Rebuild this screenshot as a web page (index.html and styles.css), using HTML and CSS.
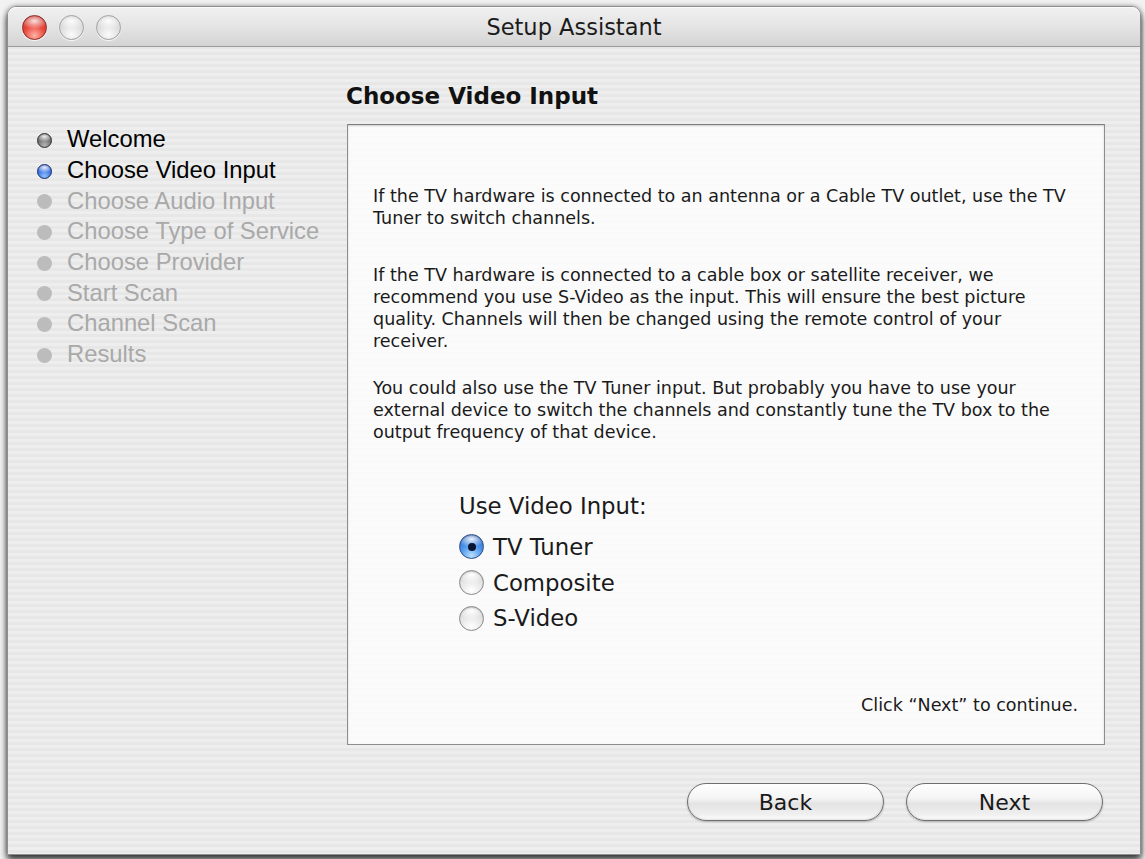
FILE: index.html
```html
<!DOCTYPE html>
<html>
<head>
<meta charset="utf-8">
<title>Setup Assistant</title>
<link rel="stylesheet" href="styles.css">
</head>
<body>
<div class="window">
  <div class="titlebar">
    <div class="lights">
      <span class="light close"></span>
      <span class="light"></span>
      <span class="light"></span>
    </div>
    <div class="title">Setup Assistant</div>
    <div class="spacer"></div>
  </div>
  <div class="content">
    <ul class="steps">
      <li class="done"><span class="dot"></span>Welcome</li>
      <li class="current"><span class="dot"></span>Choose Video Input</li>
      <li><span class="dot"></span>Choose Audio Input</li>
      <li><span class="dot"></span>Choose Type of Service</li>
      <li><span class="dot"></span>Choose Provider</li>
      <li><span class="dot"></span>Start Scan</li>
      <li><span class="dot"></span>Channel Scan</li>
      <li><span class="dot"></span>Results</li>
    </ul>
    <div class="main">
      <h1 class="heading">Choose Video Input</h1>
      <div class="panel">
        <p class="p1">If the TV hardware is connected to an antenna or a Cable TV outlet, use the TV Tuner to switch channels.</p>
        <p class="p2">If the TV hardware is connected to a cable box or satellite receiver, we recommend you use S-Video as the input. This will ensure the best picture quality. Channels will then be changed using the remote control of your receiver.</p>
        <p class="p3">You could also use the TV Tuner input. But probably you have to use your external device to switch the channels and constantly tune the TV box to the output frequency of that device.</p>
        <div class="choice">
          <div class="choice-label">Use Video Input:</div>
          <div class="radio-row"><span class="radio on"></span>TV Tuner</div>
          <div class="radio-row"><span class="radio"></span>Composite</div>
          <div class="radio-row"><span class="radio"></span>S-Video</div>
        </div>
        <div class="note">Click “Next” to continue.</div>
      </div>
      <div class="buttons">
        <button class="btn">Back</button>
        <button class="btn">Next</button>
      </div>
    </div>
  </div>
</div>
</body>
</html>
```
FILE: styles.css
```css
html, body {
  margin: 0;
  padding: 0;
}
body {
  background: #f2f2f2;
  padding: 6px 4px 0 7px;
  height: 859px;
  box-sizing: border-box;
  overflow: hidden;
  font-family: "DejaVu Sans", sans-serif;
}
.window {
  width: 1134px;
  height: 849px;
  box-sizing: border-box;
  border: 1px solid #8e8e8e;
  border-radius: 9px 9px 0 0;
  background: repeating-linear-gradient(180deg, #eeeeee 0px, #eeeeee 3px, #e7e7e7 3px, #e7e7e7 6px);
  box-shadow: 0 5px 7px rgba(0,0,0,0.75), 0 0 5px rgba(0,0,0,0.35);
  display: flex;
  flex-direction: column;
  overflow: hidden;
}
.titlebar {
  height: 39px;
  flex: none;
  border-bottom: 1px solid #9b9b9b;
  background: linear-gradient(180deg, #f1f1f1 0%, #e4e4e4 50%, #d4d4d4 100%);
  display: grid;
  grid-template-columns: 1fr auto 1fr;
  align-items: center;
  border-radius: 8px 8px 0 0;
  box-shadow: inset 0 1px 0 #fbfbfb;
}
.lights {
  display: flex;
  gap: 12px;
  padding-left: 14px;
  padding-top: 1px;
}
.light {
  width: 25px;
  height: 25px;
  box-sizing: border-box;
  border-radius: 50%;
  border: 1px solid #a3a3a3;
  background:
    radial-gradient(ellipse 60% 35% at 50% 22%, rgba(255,255,255,0.95), rgba(255,255,255,0) 100%),
    radial-gradient(circle at 50% 80%, #fbfbfb 0%, #e2e2e2 45%, #c9c9c9 100%);
  box-shadow: 0 1px 1px rgba(255,255,255,0.8);
}
.light.close {
  border-color: #8b2c25;
  background:
    radial-gradient(ellipse 60% 35% at 50% 22%, rgba(255,255,255,0.85), rgba(255,255,255,0) 100%),
    radial-gradient(circle at 50% 85%, #ffb2a6 0%, #ea4a3e 45%, #b7231a 100%);
}
.title {
  font-size: 22.5px;
  color: #1c1c1c;
  padding-top: 1px;
}
.content {
  flex: 1;
  display: flex;
}
.steps {
  list-style: none;
  margin: 0;
  padding: 77px 0 0 29px;
  width: 339px;
  box-sizing: border-box;
  font-family: "Liberation Sans", Arial, sans-serif;
  font-size: 23.8px;
  color: #a9a9a9;
}
.steps li {
  display: flex;
  align-items: center;
  height: 30.7px;
  white-space: nowrap;
}
.steps li.done, .steps li.current {
  color: #000;
}
.dot {
  width: 15px;
  height: 15px;
  box-sizing: border-box;
  border-radius: 50%;
  background: #bcbcbc;
  margin-right: 15px;
  flex: none;
  margin-top: 2px;
}
.done .dot {
  border: 1px solid #2d2d2d;
  background:
    radial-gradient(ellipse 70% 40% at 50% 20%, rgba(255,255,255,0.9), rgba(255,255,255,0) 100%),
    radial-gradient(circle at 50% 85%, #b4b4b4, #5a5a5a 70%, #3a3a3a);
}
.current .dot {
  border: 1px solid #14286a;
  background:
    radial-gradient(ellipse 70% 40% at 50% 20%, rgba(255,255,255,0.9), rgba(255,255,255,0) 100%),
    radial-gradient(circle at 50% 85%, #8ec0ff, #2a62d8 65%, #123a9e);
}
.main {
  flex: 1;
  display: flex;
  flex-direction: column;
  padding-top: 35px;
}
.heading {
  margin: 0 0 14px -1px;
  font-size: 23px;
  line-height: 28px;
  font-weight: bold;
  color: #111;
}
.panel {
  width: 758px;
  height: 621px;
  box-sizing: border-box;
  border: 1px solid #8d8d8d;
  border-top-color: #7e7e7e;
  background: rgba(255,255,255,0.78);
  box-shadow: inset 0 1px 2px rgba(0,0,0,0.18);
  padding: 60px 32px 28px 25px;
  display: flex;
  flex-direction: column;
  font-size: 17.55px;
  line-height: 22px;
  color: #1a1a1a;
}
.panel p {
  margin: 0;
}
.panel .p2 {
  margin-top: 35px;
}
.panel .p3 {
  margin-top: 25px;
}
.choice {
  margin: 48px 0 0 86px;
  font-size: 22.8px;
}
.choice-label {
  line-height: 30px;
  margin-bottom: 8px;
}
.radio-row {
  display: flex;
  align-items: center;
  height: 35.7px;
}
.radio {
  width: 25px;
  height: 25px;
  box-sizing: border-box;
  border-radius: 50%;
  border: 1px solid #8a8a8a;
  margin-right: 9px;
  flex: none;
  background:
    radial-gradient(ellipse 60% 35% at 50% 18%, rgba(255,255,255,1), rgba(255,255,255,0) 100%),
    radial-gradient(circle at 50% 85%, #ffffff 0%, #e6e6e6 50%, #c8c8c8 100%);
  box-shadow: inset 0 1px 1px rgba(0,0,0,0.15);
  position: relative;
}
.radio.on {
  border-color: #2f4f88;
  background:
    radial-gradient(ellipse 60% 35% at 50% 18%, rgba(255,255,255,0.9), rgba(255,255,255,0) 100%),
    radial-gradient(circle at 50% 90%, #b8e0ff 0%, #4f98ec 45%, #1f58bd 100%);
}
.radio.on::after {
  content: "";
  position: absolute;
  left: 50%;
  top: 50%;
  width: 8px;
  height: 8px;
  margin: -4px 0 0 -4px;
  border-radius: 50%;
  background: #0b1530;
}
.note {
  margin-top: auto;
  margin-right: -6px;
  text-align: right;
}
.buttons {
  display: flex;
  gap: 22px;
  margin-top: 38px;
  width: 756px;
  justify-content: flex-end;
}
.btn {
  width: 197px;
  height: 38px;
  border-radius: 19px;
  border: 1px solid #6f6f6f;
  background: linear-gradient(180deg, #ffffff 0%, #f4f4f4 40%, #e3e3e3 55%, #f0f0f0 85%, #ffffff 100%);
  box-shadow: 0 1px 2px rgba(0,0,0,0.25), inset 0 -1px 2px rgba(0,0,0,0.12);
  font-family: "DejaVu Sans", sans-serif;
  font-size: 22px;
  color: #1a1a1a;
  padding: 0;
}
```
